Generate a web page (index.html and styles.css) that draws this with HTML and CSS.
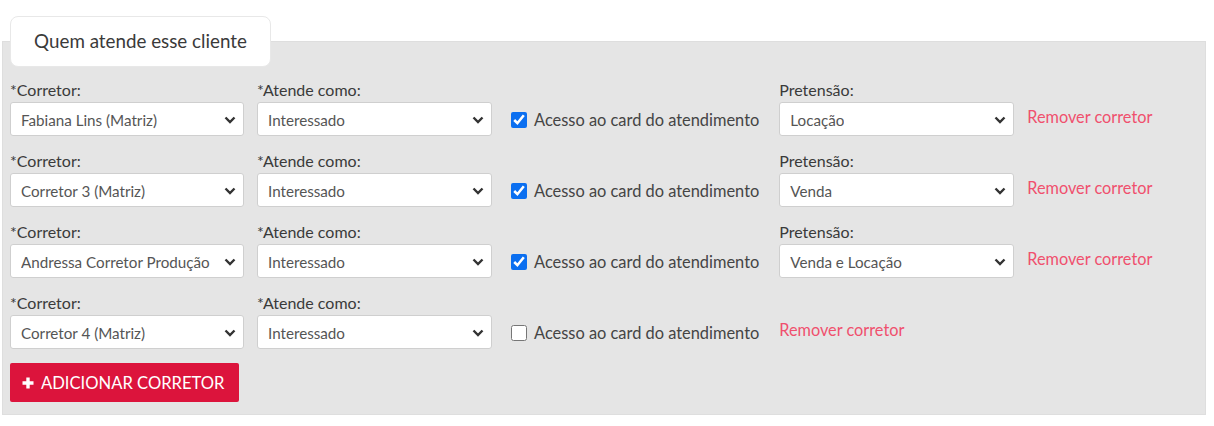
FILE: index.html
```html
<!DOCTYPE html>
<html lang="pt-BR">
<head>
<meta charset="utf-8">
<title>Quem atende esse cliente</title>
<link rel="stylesheet" href="styles.css">
</head>
<body>
<div class="wrap">
  <div class="tab">Quem atende esse cliente</div>
  <div class="panel">
    <div class="row">
      <div class="field">
        <label class="lbl">*Corretor:</label>
        <div class="sel"><span class="val">Fabiana Lins (Matriz)</span><svg class="chev" viewBox="0 0 12 8"><path d="M1.5 1.5 L6 6 L10.5 1.5" /></svg></div>
      </div>
      <div class="field">
        <label class="lbl">*Atende como:</label>
        <div class="sel"><span class="val">Interessado</span><svg class="chev" viewBox="0 0 12 8"><path d="M1.5 1.5 L6 6 L10.5 1.5" /></svg></div>
      </div>
      <label class="check"><input type="checkbox" checked><span>Acesso ao card do atendimento</span></label>
      <div class="field">
        <label class="lbl">Pretensão:</label>
        <div class="sel"><span class="val">Locação</span><svg class="chev" viewBox="0 0 12 8"><path d="M1.5 1.5 L6 6 L10.5 1.5" /></svg></div>
      </div>
      <a class="remove">Remover corretor</a>
    </div>
    <div class="row">
      <div class="field">
        <label class="lbl">*Corretor:</label>
        <div class="sel"><span class="val">Corretor 3 (Matriz)</span><svg class="chev" viewBox="0 0 12 8"><path d="M1.5 1.5 L6 6 L10.5 1.5" /></svg></div>
      </div>
      <div class="field">
        <label class="lbl">*Atende como:</label>
        <div class="sel"><span class="val">Interessado</span><svg class="chev" viewBox="0 0 12 8"><path d="M1.5 1.5 L6 6 L10.5 1.5" /></svg></div>
      </div>
      <label class="check"><input type="checkbox" checked><span>Acesso ao card do atendimento</span></label>
      <div class="field">
        <label class="lbl">Pretensão:</label>
        <div class="sel"><span class="val">Venda</span><svg class="chev" viewBox="0 0 12 8"><path d="M1.5 1.5 L6 6 L10.5 1.5" /></svg></div>
      </div>
      <a class="remove">Remover corretor</a>
    </div>
    <div class="row">
      <div class="field">
        <label class="lbl">*Corretor:</label>
        <div class="sel"><span class="val">Andressa Corretor Produção (Matriz)</span><svg class="chev" viewBox="0 0 12 8"><path d="M1.5 1.5 L6 6 L10.5 1.5" /></svg></div>
      </div>
      <div class="field">
        <label class="lbl">*Atende como:</label>
        <div class="sel"><span class="val">Interessado</span><svg class="chev" viewBox="0 0 12 8"><path d="M1.5 1.5 L6 6 L10.5 1.5" /></svg></div>
      </div>
      <label class="check"><input type="checkbox" checked><span>Acesso ao card do atendimento</span></label>
      <div class="field">
        <label class="lbl">Pretensão:</label>
        <div class="sel"><span class="val">Venda e Locação</span><svg class="chev" viewBox="0 0 12 8"><path d="M1.5 1.5 L6 6 L10.5 1.5" /></svg></div>
      </div>
      <a class="remove">Remover corretor</a>
    </div>
    <div class="row">
      <div class="field">
        <label class="lbl">*Corretor:</label>
        <div class="sel"><span class="val">Corretor 4 (Matriz)</span><svg class="chev" viewBox="0 0 12 8"><path d="M1.5 1.5 L6 6 L10.5 1.5" /></svg></div>
      </div>
      <div class="field">
        <label class="lbl">*Atende como:</label>
        <div class="sel"><span class="val">Interessado</span><svg class="chev" viewBox="0 0 12 8"><path d="M1.5 1.5 L6 6 L10.5 1.5" /></svg></div>
      </div>
      <label class="check"><input type="checkbox"><span>Acesso ao card do atendimento</span></label>
      <a class="remove">Remover corretor</a>
    </div>
    <button class="add"><svg class="plus" viewBox="0 0 12 12"><path d="M6 0.5 V11.5 M0.5 6 H11.5" /></svg>ADICIONAR CORRETOR</button>
  </div>
</div>
</body>
</html>
```
FILE: styles.css
```css
* { box-sizing: border-box; }
html, body { margin: 0; padding: 0; background: #fff; }
body { font-family: Lato, "Open Sans", sans-serif; color: #333; }

.wrap { padding-top: 16px; }

.tab {
  position: relative;
  z-index: 1;
  margin-left: 10px;
  width: 261px;
  height: 51px;
  background: #fff;
  border: 1px solid #e8e8e8;
  border-radius: 8px;
  font-size: 18.8px;
  color: #3a3a3a;
  display: flex;
  align-items: center;
  justify-content: center;
  padding-bottom: 2px;
}

.panel {
  margin: -26px 8px 0 2px;
  background: #e5e5e5;
  border: 1px solid #dedede;
  padding: 38px 7px 12px 7px;
}

.row {
  display: flex;
  align-items: flex-end;
  margin-bottom: 15px;
}

.field { width: 235px; margin-right: 13px; flex: none; }
.field:first-child { width: 234px; }
.lbl { display: block; font-size: 16px; line-height: 20px; color: #3a3a3a; margin-bottom: 2px; }

.sel {
  position: relative;
  height: 34px;
  background: #fff;
  border: 1px solid #cfcfcf;
  border-radius: 3px;
  display: flex;
  align-items: center;
  padding: 2px 32px 0 10px;
  font-size: 15.2px;
  color: #555;
  overflow: hidden;
}
.val { white-space: nowrap; overflow: hidden; }
.chev {
  position: absolute;
  right: 7px;
  top: 13px;
  width: 12px;
  height: 8px;
  fill: none;
  stroke: #333;
  stroke-width: 2.4;
}

.check {
  display: flex;
  align-items: center;
  height: 34px;
  margin-left: 6px;
  margin-right: 20px;
  font-size: 16.4px;
  color: #444;
  flex: none;
}
.check input {
  width: 16px;
  height: 16px;
  margin: 2px 7px 0 0;
  accent-color: #0b6ff0;
}

.remove {
  display: flex;
  align-items: center;
  height: 34px;
  padding-bottom: 6px;
  font-size: 16.3px;
  color: #f0506e;
  cursor: pointer;
}

.add {
  margin-top: -1px;
  display: flex;
  align-items: center;
  height: 39px;
  width: 229px;
  padding: 0 0 0 12px;
  background: #dc143c;
  color: #fff;
  border: none;
  border-radius: 2px;
  font-family: Lato, "Open Sans", sans-serif;
  font-size: 16.6px;
  cursor: pointer;
}
.plus {
  width: 12px;
  height: 12px;
  margin-right: 7px;
  stroke: #fff;
  stroke-width: 3.4;
  fill: none;
}
```
